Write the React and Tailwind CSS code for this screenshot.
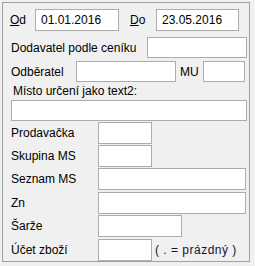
const font = { fontFamily: '"Liberation Sans", Arial, sans-serif' }

function Box({ w, h = 'h-[22px]', children, className = '' }) {
  return (
    <div className={`${w} ${h} shrink-0 border border-[#acacac] bg-white flex items-center px-[5px] text-[12px] text-black ${className}`}>
      {children}
    </div>
  )
}

function Row({ label, w, top, h }) {
  return (
    <div className={`flex items-center pl-[8px] ${top}`}>
      <span className="w-[87px] shrink-0">{label}</span>
      <Box w={w} h={h} />
    </div>
  )
}

export default function App() {
  return (
    <div className="w-[255px] h-[266px] bg-[#f0f0f0] pt-[2px] pl-[2px] text-[12px] text-black" style={font}>
      <div className="w-[248px] h-[260px] border border-[#a0a0a0] flex flex-col">
        {/* dates */}
        <div className="flex items-center pl-[7px] mt-[6px]">
          <span className="w-[25px] shrink-0"><u>O</u>d</span>
          <Box w="w-[84px]">01.01.2016</Box>
          <span className="w-[26px] ml-[11px] shrink-0"><u>D</u>o</span>
          <Box w="w-[83px]">23.05.2016</Box>
        </div>

        <div className="flex items-center pl-[8px] mt-[6px]">
          <span className="w-[136px] shrink-0">Dodavatel podle ceníku</span>
          <Box w="w-[100px]" h="h-[21px]" />
        </div>

        <div className="flex items-center pl-[8px] mt-[3px]">
          <span className="w-[65px] shrink-0">Odběratel</span>
          <Box w="w-[100px]" h="h-[21px]" />
          <span className="w-[27px] pl-[4px] shrink-0">MU</span>
          <Box w="w-[42px]" h="h-[21px]" />
        </div>

        <div className="pl-[10px] mt-[1px] h-[17px] leading-[16px]">Místo určení jako text2:</div>
        <div className="pl-[8px]">
          <Box w="w-[236px]" h="h-[21px]" />
        </div>

        <Row label="Prodavačka" w="w-[54px]" top="mt-[1px]" />
        <Row label="Skupina MS" w="w-[54px]" top="mt-[1px]" />
        <Row label="Seznam MS" w="w-[148px]" top="mt-[1px]" />
        <Row label="Zn" w="w-[148px]" top="mt-[2px]" />
        <Row label="Šarže" w="w-[84px]" top="mt-[1px]" />
        <div className="flex items-center pl-[8px] mt-[2px]">
          <span className="w-[87px] shrink-0">Účet zboží</span>
          <Box w="w-[54px]" />
          <span className="ml-[3px] tracking-[0.5px] text-[#101040]">( . = prázdný )</span>
        </div>
      </div>
    </div>
  )
}
